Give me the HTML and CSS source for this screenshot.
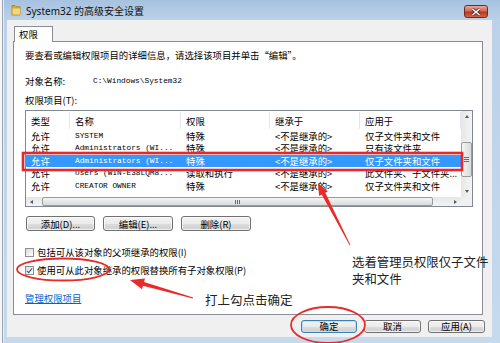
FILE: index.html
```html
<!DOCTYPE html>
<html lang="zh-CN">
<head>
  <meta charset="UTF-8">
  <title>System32 的高级安全设置</title>
  <link rel="stylesheet" href="styles.css">
</head>
<body>
  <div class="edge"></div>
  <div class="window">
    <div class="titlebar">
      <svg class="folder" width="10" height="12" viewBox="0 0 10 12">
        <path d="M1 1.5h3l1 1.2h4V11H1z" fill="#d9a934" stroke="#a9802a" stroke-width="0.8"/>
        <path d="M1.5 4.5h7.5V10.6H1.5z" fill="#f5d67a"/>
      </svg>
      <span class="title">System32 的高级安全设置</span>
      <div class="close">
        <svg width="10" height="8" viewBox="0 0 10 8">
          <path d="M1.5 1l7 6M8.5 1l-7 6" stroke="#5a2018" stroke-width="3"/>
          <path d="M1.5 1l7 6M8.5 1l-7 6" stroke="#fff" stroke-width="1.6"/>
        </svg>
      </div>
    </div>

    <div class="client">
      <div class="tabs"><div class="tab">权限</div></div>

      <div class="panel">
        <p class="intro">要查看或编辑权限项目的详细信息，请选择该项目并单击“编辑”。</p>
        <div class="objname"><span class="key">对象名称:</span><span class="mono">C:\Windows\System32</span></div>
        <div class="label">权限项目(T):</div>

        <div class="listbox">
          <div class="list">
            <div class="row head">
              <span>类型</span><span>名称</span><span>权限</span><span>继承于</span><span>应用于</span>
            </div>
            <div class="row">
              <span>允许</span><span class="mono">SYSTEM</span><span>特殊</span><span>&lt;不是继承的&gt;</span><span>仅子文件夹和文件</span>
            </div>
            <div class="row">
              <span>允许</span><span class="mono">Administrators (WI...</span><span>特殊</span><span>&lt;不是继承的&gt;</span><span>只有该文件夹</span>
            </div>
            <div class="row selected">
              <span>允许</span><span class="mono">Administrators (WI...</span><span>特殊</span><span>&lt;不是继承的&gt;</span><span>仅子文件夹和文件</span>
            </div>
            <div class="row">
              <span>允许</span><span class="mono">Users (WIN-E38LQM8...</span><span>读取和执行</span><span>&lt;不是继承的&gt;</span><span>此文件夹、子文件夹...</span>
            </div>
            <div class="row">
              <span>允许</span><span class="mono">CREATOR OWNER</span><span>特殊</span><span>&lt;不是继承的&gt;</span><span>仅子文件夹和文件</span>
            </div>
          </div>
          <div class="vscroll">
            <div class="arrow up"></div>
            <div class="thumb vthumb"><i></i></div>
            <div class="arrow down"></div>
          </div>
          <div class="hscroll">
            <div class="arrow left"></div>
            <div class="thumb hthumb"><i></i></div>
            <div class="arrow right"></div>
          </div>
          <div class="corner"></div>
        </div>

        <div class="actions">
          <button class="btn">添加(D)...</button>
          <button class="btn">编辑(E)...</button>
          <button class="btn">删除(R)</button>
        </div>

        <label class="check"><span class="box"></span>包括可从该对象的父项继承的权限(I)</label>
        <label class="check second"><span class="box checked"></span>使用可从此对象继承的权限替换所有子对象权限(P)</label>

        <a class="link" href="#">管理权限项目</a>
      </div>

      <div class="footer">
        <button class="btn default">确定</button>
        <button class="btn">取消</button>
        <button class="btn">应用(A)</button>
      </div>
    </div>
  </div>

  <svg class="marks" width="500" height="343" viewBox="0 0 500 343">
    <rect x="23" y="153" width="439" height="17" fill="none" stroke="#e8262e" stroke-width="2.6"/>
    <polygon points="318,183 327.9,191.4 325.3,192.8 350.4,245 349.6,245.2 321.7,194.6 319.1,196" fill="#ea2a2a"/>
    <polygon points="130,280 145,278.6 144,282 193.2,297.6 192.8,298.4 142.9,285.8 142,289.2" fill="#ea2a2a"/>
    <ellipse cx="63" cy="269.5" rx="46" ry="11" fill="none" stroke="#e82a2a" stroke-width="1.8"/>
    <ellipse cx="328" cy="325" rx="37" ry="18" fill="none" stroke="#e82a2a" stroke-width="1.8"/>
  </svg>
  <div class="note note-select">选着管理员权限仅子文件夹和文件</div>
  <div class="note note-tick">打上勾点击确定</div>
</body>
</html>
```

FILE: styles.css
```css
* {
  box-sizing: border-box;
}

body {
  margin: 0;
  width: 500px;
  height: 343px;
  display: flex;
  overflow: hidden;
  position: relative;
  background: #fff;
  font-family: "Noto Sans CJK SC", sans-serif;
  font-size: 9.4px;
  color: #000;
}

.mono {
  font-family: "Liberation Mono", monospace;
  font-size: 7.8px;
}

/* window chrome */

.edge {
  width: 4px;
  background: linear-gradient(to right, #f6f6f6 0 2px, #9aa6b4 2px 3px, #e4ecf4 3px);
}

.window {
  flex: 1;
  display: flex;
  flex-direction: column;
  padding: 0 8px 6px 3px;
  background: linear-gradient(#a7c2df, #bbd1e9 20px, #c6daee);
}

.titlebar {
  height: 20px;
  display: flex;
  align-items: center;
  padding-left: 4px;
}

.folder {
  margin-right: 5px;
}

.title {
  flex: 1;
  font-family: "Noto Sans", "Noto Sans CJK SC", sans-serif;
  font-size: 10px;
  color: #111;
}

.close {
  align-self: flex-start;
  width: 24px;
  height: 13px;
  margin: 5px 4px 0 0;
  display: flex;
  justify-content: center;
  align-items: center;
  border: 1px solid #6e2b22;
  border-radius: 3px;
  background: linear-gradient(#e8a898, #d06a5a 45%, #b8391f 55%, #d0664c);
}

.client {
  flex: 1;
  display: flex;
  flex-direction: column;
  padding: 6px 9px 4px 6px;
  background: #f0f0f0;
}

.tabs {
  display: flex;
  padding-left: 1px;
}

.tab {
  position: relative;
  z-index: 1;
  width: 39px;
  height: 16px;
  margin-bottom: -1px;
  padding-left: 4px;
  border: 1px solid #898c95;
  border-bottom: none;
  background: #fff;
  line-height: 14px;
}

/* tab page */

.panel {
  flex: 1;
  display: flex;
  flex-direction: column;
  align-items: flex-start;
  padding: 0 9px 0 11px;
  border: 1px solid #898c95;
  background: #fff;
  line-height: 12px;
}

.intro {
  margin: 7px 0 0;
}

.objname {
  display: flex;
  align-items: center;
  margin-top: 14px;
}

.objname .key {
  width: 68px;
}

.label {
  margin-top: 7px;
}

.listbox {
  align-self: stretch;
  display: grid;
  grid-template-columns: 1fr 11px;
  grid-template-rows: 86px 9px;
  margin-top: 4px;
  border: 1px solid #828790;
}

.list {
  overflow: hidden;
}

.row {
  display: grid;
  grid-template-columns: 44px 111px 89px 90px 1fr;
  height: 12.5px;
  line-height: 12.5px;
}

.row span {
  padding-left: 5px;
  white-space: nowrap;
  overflow: hidden;
}

.row.head {
  height: 18px;
  line-height: 18px;
  padding-top: 1px;
  margin-bottom: 0.5px;
}

.row.head span {
  border-right: 1px solid #e3e6ea;
}

.row.selected {
  background: #3399ff;
  color: #fff;
}

/* scrollbars */

.vscroll,
.hscroll {
  display: flex;
  background: linear-gradient(to right, #e6e6e6, #f4f4f4);
}

.vscroll {
  flex-direction: column;
  justify-content: space-between;
}

.hscroll {
  background: linear-gradient(#e6e6e6, #f4f4f4);
}

.corner {
  background: #f0f0f0;
}

.arrow {
  flex: none;
  width: 11px;
  height: 11px;
  display: flex;
  justify-content: center;
  align-items: center;
}

.hscroll .arrow {
  height: 9px;
}

.arrow::after {
  content: "";
  border: 2.5px solid transparent;
}

.arrow.up::after {
  border-bottom: 3px solid #505a6a;
  border-top-width: 0;
}

.arrow.down::after {
  border-top: 3px solid #505a6a;
  border-bottom-width: 0;
}

.arrow.left::after {
  border-right: 3px solid #505a6a;
  border-left-width: 0;
}

.arrow.right::after {
  border-left: 3px solid #505a6a;
  border-right-width: 0;
}

.thumb {
  display: flex;
  justify-content: center;
  align-items: center;
  border: 1px solid #9a9a9a;
  border-radius: 2px;
  background: linear-gradient(to right, #f4f4f4, #dadada);
}

.vthumb {
  height: 35px;
  margin: 20px 0 auto;
}

.hthumb {
  width: 391px;
  margin: 0 auto 0 5px;
  background: linear-gradient(#f4f4f4, #dadada);
}

.vthumb i {
  width: 5px;
  height: 5px;
  border-top: 1px solid #6a6a6a;
  border-bottom: 1px solid #6a6a6a;
  background: linear-gradient(transparent 1px, #6a6a6a 1px 2px, transparent 2px);
}

.hthumb i {
  width: 5px;
  height: 4px;
  border-left: 1px solid #6a6a6a;
  border-right: 1px solid #6a6a6a;
  background: linear-gradient(to right, transparent 1px, #6a6a6a 1px 2px, transparent 2px);
}

/* buttons */

.actions {
  display: flex;
  gap: 8px;
  margin-top: 9px;
  padding-left: 1px;
}

.btn {
  width: 70px;
  height: 15px;
  padding: 0;
  border: 1px solid #707070;
  border-radius: 3px;
  background: linear-gradient(#f2f2f2, #ebebeb 50%, #dddddd 50%, #cfcfcf);
  box-shadow: inset 0 0 0 1px rgba(255, 255, 255, 0.7);
  font-family: "Noto Sans CJK SC", sans-serif;
  font-size: 9.4px;
  line-height: 12px;
  color: #000;
}

.actions .btn:first-child {
  width: 69px;
}

.check {
  display: flex;
  align-items: center;
  gap: 3px;
  margin-top: 15px;
}

.check.second {
  margin-top: 6px;
}

.box {
  width: 9px;
  height: 9px;
  border: 1px solid #8e8f8f;
  background: linear-gradient(135deg, #dcdcdc, #fdfdfd);
  position: relative;
}

.box.checked::after {
  content: "";
  position: absolute;
  left: 2px;
  top: 0;
  width: 2px;
  height: 5px;
  border-right: 1.5px solid #34508a;
  border-bottom: 1.5px solid #34508a;
  transform: rotate(40deg);
}

.link {
  margin-top: 16px;
  color: #0066cc;
  text-decoration: underline;
}

.footer {
  display: flex;
  justify-content: flex-end;
  gap: 7px;
  margin: 5px -2px 0 0;
}

.footer .btn {
  width: 57px;
  height: 13px;
  line-height: 11px;
}

.footer .btn.default {
  width: 56px;
  border-color: #3c7fb1;
  box-shadow: inset 0 0 0 1px #b8e2f8;
}

/* annotations drawn over the screenshot */

.marks {
  position: absolute;
  left: 0;
  top: 0;
  pointer-events: none;
}

.note {
  position: absolute;
  font-size: 12.4px;
  line-height: 17px;
  color: #222;
}

.note-select {
  left: 352px;
  top: 254px;
  width: 140px;
}

.note-tick {
  left: 205px;
  top: 291px;
  font-size: 12.5px;
}
```
